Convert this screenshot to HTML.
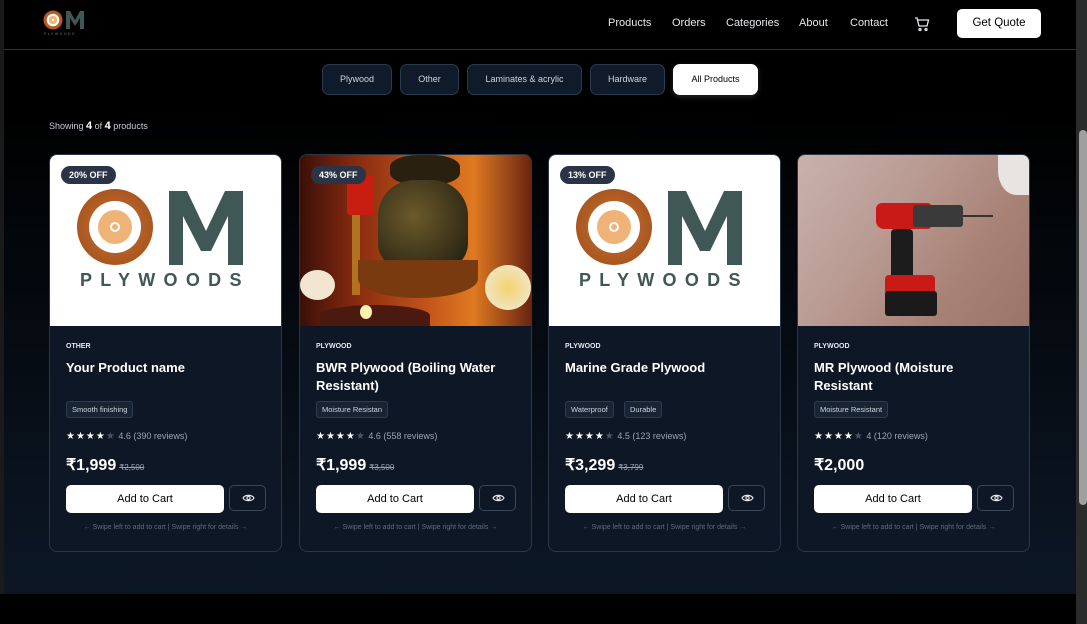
<!DOCTYPE html>
<html><head><meta charset="utf-8">
<style>
*{box-sizing:border-box;margin:0;padding:0}
html,body{width:1087px;height:624px;overflow:hidden}
body{font-family:"Liberation Sans",sans-serif;background:#000;position:relative;color:#fff}
.main{position:absolute;left:4px;top:0;width:1072px;height:594px;background:linear-gradient(#000 0px,#000 110px,#0c1726 594px)}
.lb{position:absolute;left:0;top:0;width:4px;height:624px;background:#1a1a1a}
.hdr{position:absolute;left:4px;top:0;width:1072px;height:50px;background:#000;border-bottom:1px solid #2a3442}
.nav{position:absolute;top:17px;font-size:11px;color:#e5e7eb}
.quote{position:absolute;left:957px;top:9px;width:84px;height:29px;background:#fff;color:#000;border-radius:5px;font-size:11.5px;text-align:center;line-height:29px}
.foot{position:absolute;left:0;top:594px;width:1076px;height:30px;background:#000}
.sb{position:absolute;left:1076px;top:0;width:11px;height:624px;background:#2b2b2b}
.thumb{position:absolute;left:1079px;top:130px;width:8px;height:375px;background:#9f9f9f;border-radius:4px}
.pill{position:absolute;top:64px;height:31px;border:1px solid #2c3a4d;background:#0f1a2a;border-radius:7px;font-size:9px;color:#d1d5db;text-align:center;line-height:29px}
.pill.on{background:#fff;color:#000;border-color:#fff;box-shadow:0 2px 6px rgba(255,255,255,.15)}
.show{position:absolute;left:49px;top:120px;font-size:9px;color:#c7ccd4}
.show b{color:#fff;font-size:11px}
.card{position:absolute;top:154px;width:233px;height:398px;border:1px solid #2a3749;border-radius:8px;background:#0d1726;overflow:hidden}
.img{position:absolute;left:0;top:0;width:231px;height:171px;overflow:hidden}
.badge{position:absolute;left:11px;top:11px;height:18px;padding:0 8px;background:#2a3446;border-radius:9px;font-size:9px;font-weight:bold;color:#fff;line-height:18px}
.cat{position:absolute;left:16px;top:188px;font-size:7px;font-weight:bold;color:#e5e7eb}
.title{position:absolute;left:16px;top:204px;width:190px;font-size:13px;font-weight:bold;line-height:18px;color:#fff}
.tag{position:absolute;left:16px;top:246px;height:17px;padding:0 5px;border:1px solid #2f3c4e;background:#182333;border-radius:3px;font-size:7.5px;color:#d1d5db;line-height:15px}
.rate{position:absolute;left:16px;top:276px;font-size:9px;color:#9ca3af}
.rate span{color:#fff;font-size:10px;letter-spacing:1px}
.rate i{font-style:normal;color:#4b5563}
.price{position:absolute;left:16px;top:300px;font-size:16px;font-weight:bold;color:#fff}
.price s{font-size:8px;font-weight:normal;color:#9ca3af;margin-left:3px}
.add{position:absolute;left:16px;top:330px;width:158px;height:28px;background:#fff;border-radius:5px;color:#000;font-size:11px;text-align:center;line-height:28px}
.eye{position:absolute;left:179px;top:330px;width:37px;height:26px;border:1px solid #3a4759;border-radius:5px}
.swipe{position:absolute;left:0;width:231px;top:369px;text-align:center;font-size:7px;color:#5f6b7c}
</style></head><body>
<div class="main"></div>
<div class="lb"></div>
<div class="hdr">
<svg style="position:absolute;left:38px;top:9px" width="50" height="28" viewBox="0 0 50 28">
<circle cx="11" cy="11" r="9.5" fill="#b45a22"/><circle cx="11" cy="11" r="6.3" fill="#fff"/><circle cx="11" cy="11" r="4.2" fill="#f0b678"/><circle cx="11" cy="11" r="1.2" fill="#fff"/>
<path d="M24 20V2h4l5 9 5-9h4v18h-4V9l-5 8-5-8v11z" fill="#3f5755"/>
<text x="2" y="26" font-size="3.6" fill="#3f5755" font-weight="bold" letter-spacing="1.4" font-family="Liberation Sans">PLYWOODS</text>
</svg>
</div>
<div class="nav" style="left:608px">Products</div>
<div class="nav" style="left:672px">Orders</div>
<div class="nav" style="left:726px">Categories</div>
<div class="nav" style="left:799px">About</div>
<div class="nav" style="left:850px">Contact</div>
<svg style="position:absolute;left:914px;top:16px" width="16" height="16" viewBox="0 0 16 16" fill="none" stroke="#e5e7eb" stroke-width="1.3"><path d="M1 2h2l2 8h8l1.5-6H4"/><circle cx="6" cy="13.5" r="1"/><circle cx="12" cy="13.5" r="1"/></svg>
<div class="quote">Get Quote</div>

<div class="pill" style="left:322px;width:70px">Plywood</div>
<div class="pill" style="left:400px;width:59px">Other</div>
<div class="pill" style="left:467px;width:115px">Laminates &amp; acrylic</div>
<div class="pill" style="left:590px;width:75px">Hardware</div>
<div class="pill on" style="left:673px;width:85px">All Products</div>
<div class="show">Showing <b>4</b> of <b>4</b> products</div>

<!-- card 1 -->
<div class="card" style="left:49px">
<div class="img" style="background:#fff">
<svg width="231" height="171" viewBox="0 0 231 171">
<defs><radialGradient id="w"><stop offset="0" stop-color="#c9743a"/><stop offset="1" stop-color="#a9561f"/></radialGradient></defs>
<circle cx="65" cy="72" r="38" fill="url(#w)"/><circle cx="65" cy="72" r="26" fill="#fff"/><circle cx="65" cy="72" r="17" fill="#f0b377"/><circle cx="65" cy="72" r="4" fill="none" stroke="#fff" stroke-width="2"/>
<path d="M119 110V36h18l19 40 19-40h18v74h-15V61l-17 35h-10l-18-35v49z" fill="#3f5755"/>
<text x="30" y="131" font-size="18" font-weight="bold" fill="#3f5755" letter-spacing="8.3" font-family="Liberation Sans">PLYWOODS</text>
</svg>
<div class="badge">20% OFF</div></div>
<div class="cat">OTHER</div>
<div class="title">Your Product name</div>
<div class="tag">Smooth finishing</div>
<div class="rate"><span>★★★★<i>★</i></span> 4.6 (390 reviews)</div>
<div class="price">₹1,999<s>₹2,500</s></div>
<div class="add">Add to Cart</div>
<div class="eye"><svg style="position:absolute;left:12px;top:7px" width="13" height="10" viewBox="0 0 13 10" fill="none" stroke="#e5e7eb" stroke-width="1.2"><path d="M1 5C3 1.5 10 1.5 12 5C10 8.5 3 8.5 1 5z"/><circle cx="6.5" cy="5" r="1.6"/></svg></div>
<div class="swipe">← Swipe left to add to cart | Swipe right for details →</div>
</div>

<!-- card 2 -->
<div class="card" style="left:299px">
<div class="img" style="background:linear-gradient(90deg,#3a0f08 0%,#8a2c10 25%,#c2541a 55%,#e07a22 75%,#6a2510 100%)">
<div style="position:absolute;left:47px;top:20px;width:27px;height:40px;background:#c81e12;border-radius:3px"></div>
<div style="position:absolute;left:52px;top:60px;width:8px;height:80px;background:#b07420"></div>
<div style="position:absolute;left:90px;top:0;width:70px;height:30px;background:#2a2010;border-radius:40%"></div>
<div style="position:absolute;left:78px;top:25px;width:90px;height:90px;background:radial-gradient(circle at 40% 40%,#6b5a2a,#1d1a10);border-radius:40% 40% 30% 30%"></div>
<div style="position:absolute;left:58px;top:105px;width:120px;height:38px;background:#7a3a10;border-radius:0 0 50% 50%"></div>
<div style="position:absolute;left:0;top:115px;width:35px;height:30px;background:#f2e6d0;border-radius:50%"></div>
<div style="position:absolute;left:185px;top:110px;width:46px;height:45px;background:radial-gradient(circle,#f3d270,#f2ecde);border-radius:50%"></div>
<div style="position:absolute;left:20px;top:150px;width:110px;height:21px;background:#4a1a10;border-radius:50% 50% 0 0"></div>
<div style="position:absolute;left:60px;top:150px;width:12px;height:14px;background:#fff2b0;border-radius:50%"></div>
<div class="badge">43% OFF</div></div>
<div class="cat">PLYWOOD</div>
<div class="title">BWR Plywood (Boiling Water Resistant)</div>
<div class="tag">Moisture Resistan</div>
<div class="rate"><span>★★★★<i>★</i></span> 4.6 (558 reviews)</div>
<div class="price">₹1,999<s>₹3,500</s></div>
<div class="add">Add to Cart</div>
<div class="eye"><svg style="position:absolute;left:12px;top:7px" width="13" height="10" viewBox="0 0 13 10" fill="none" stroke="#e5e7eb" stroke-width="1.2"><path d="M1 5C3 1.5 10 1.5 12 5C10 8.5 3 8.5 1 5z"/><circle cx="6.5" cy="5" r="1.6"/></svg></div>
<div class="swipe">← Swipe left to add to cart | Swipe right for details →</div>
</div>

<!-- card 3 -->
<div class="card" style="left:548px">
<div class="img" style="background:#fff">
<svg width="231" height="171" viewBox="0 0 231 171">
<circle cx="65" cy="72" r="38" fill="url(#w)"/><circle cx="65" cy="72" r="26" fill="#fff"/><circle cx="65" cy="72" r="17" fill="#f0b377"/><circle cx="65" cy="72" r="4" fill="none" stroke="#fff" stroke-width="2"/>
<path d="M119 110V36h18l19 40 19-40h18v74h-15V61l-17 35h-10l-18-35v49z" fill="#3f5755"/>
<text x="30" y="131" font-size="18" font-weight="bold" fill="#3f5755" letter-spacing="8.3" font-family="Liberation Sans">PLYWOODS</text>
</svg>
<div class="badge">13% OFF</div></div>
<div class="cat">PLYWOOD</div>
<div class="title">Marine Grade Plywood</div>
<div class="tag">Waterproof</div><div class="tag" style="left:75px">Durable</div>
<div class="rate"><span>★★★★<i>★</i></span> 4.5 (123 reviews)</div>
<div class="price">₹3,299<s>₹3,799</s></div>
<div class="add">Add to Cart</div>
<div class="eye"><svg style="position:absolute;left:12px;top:7px" width="13" height="10" viewBox="0 0 13 10" fill="none" stroke="#e5e7eb" stroke-width="1.2"><path d="M1 5C3 1.5 10 1.5 12 5C10 8.5 3 8.5 1 5z"/><circle cx="6.5" cy="5" r="1.6"/></svg></div>
<div class="swipe">← Swipe left to add to cart | Swipe right for details →</div>
</div>

<!-- card 4 -->
<div class="card" style="left:797px">
<div class="img" style="background:linear-gradient(125deg,#c9b2ac 0%,#b89a92 40%,#a98276 70%,#9a7468 100%)">
<div style="position:absolute;left:200px;top:0;width:31px;height:40px;background:#e8e4e2;border-radius:0 0 0 60%"></div>
<div style="position:absolute;left:78px;top:48px;width:55px;height:26px;background:#c81a16;border-radius:6px 3px 3px 8px"></div>
<div style="position:absolute;left:115px;top:50px;width:50px;height:22px;background:#3a3a3a;border-radius:3px"></div>
<div style="position:absolute;left:165px;top:60px;width:30px;height:2px;background:#333"></div>
<div style="position:absolute;left:93px;top:74px;width:22px;height:50px;background:#1c1c1c;border-radius:4px"></div>
<div style="position:absolute;left:87px;top:120px;width:50px;height:20px;background:#c81a16;border-radius:4px"></div>
<div style="position:absolute;left:87px;top:136px;width:52px;height:25px;background:#1a1a1a;border-radius:3px"></div>
</div>
<div class="cat">PLYWOOD</div>
<div class="title">MR Plywood (Moisture Resistant</div>
<div class="tag">Moisture Resistant</div>
<div class="rate"><span>★★★★<i>★</i></span> 4 (120 reviews)</div>
<div class="price">₹2,000</div>
<div class="add">Add to Cart</div>
<div class="eye"><svg style="position:absolute;left:12px;top:7px" width="13" height="10" viewBox="0 0 13 10" fill="none" stroke="#e5e7eb" stroke-width="1.2"><path d="M1 5C3 1.5 10 1.5 12 5C10 8.5 3 8.5 1 5z"/><circle cx="6.5" cy="5" r="1.6"/></svg></div>
<div class="swipe">← Swipe left to add to cart | Swipe right for details →</div>
</div>

<div class="foot"></div>
<div class="sb"></div><div class="thumb"></div>
</body></html>
